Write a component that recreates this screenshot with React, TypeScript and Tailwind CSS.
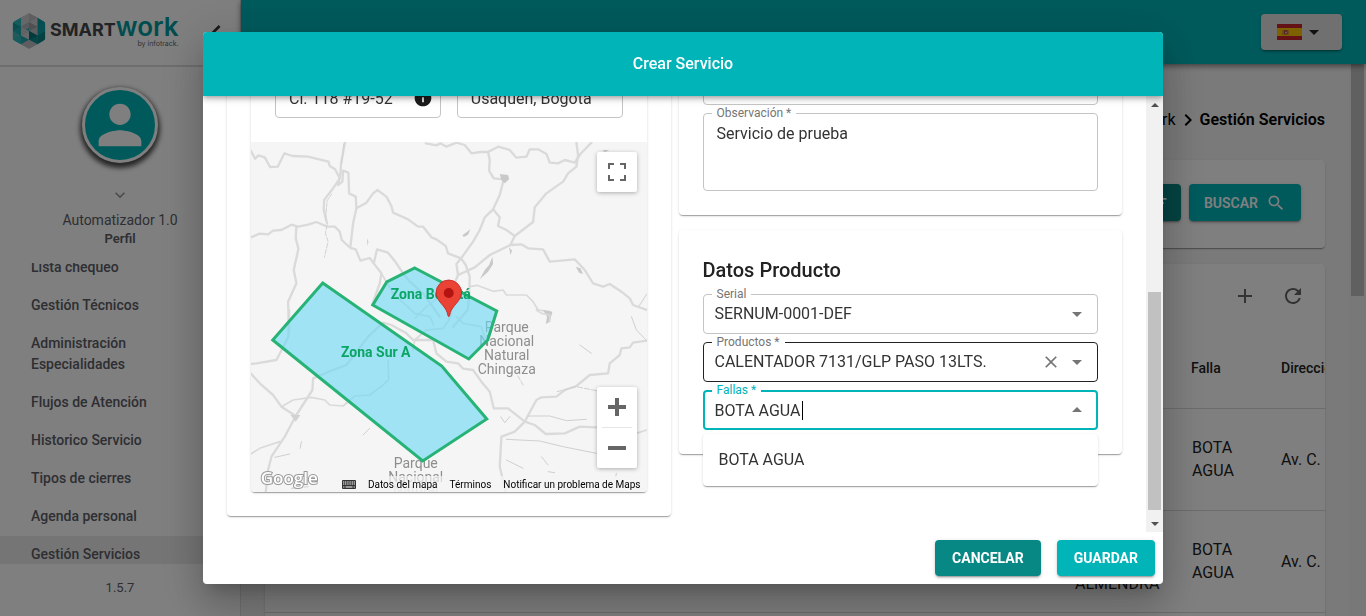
import React from "react";
import {
  MdPerson,
  MdExpandMore,
  MdChevronLeft,
  MdChevronRight,
  MdArrowDropDown,
  MdArrowDropUp,
  MdSearch,
  MdFilterList,
  MdAdd,
  MdRefresh,
  MdInfo,
  MdClose,
} from "react-icons/md";

const cardShadow =
  "shadow-[0_2px_1px_-1px_rgba(0,0,0,0.2),0_1px_1px_0_rgba(0,0,0,0.14),0_1px_3px_0_rgba(0,0,0,0.12)]";
const buttonShadow =
  "shadow-[0_3px_1px_-2px_rgba(0,0,0,0.2),0_2px_2px_0_rgba(0,0,0,0.14),0_1px_5px_0_rgba(0,0,0,0.12)]";

const navItems = [
  "Lista chequeo",
  "Gestión Técnicos",
  "Administración Especialidades",
  "Flujos de Atención",
  "Historico Servicio",
  "Tipos de cierres",
  "Agenda personal",
  "Gestión Servicios",
];

function Logo() {
  return (
    <div className="flex items-center gap-1">
      <svg viewBox="0 0 100 108" className="h-9 w-[34px]" aria-hidden="true">
        <path
          d="M50 3 95 27Q97 28 97 31V77Q97 80 95 81L50 105 5 81Q3 80 3 77V31Q3 28 5 27Z"
          fill="#23b5ba"
          stroke="#23b5ba"
          strokeWidth="3"
          strokeLinejoin="round"
        />
        <path d="M50 1 76 14 76 42 50 28 26 42 26 14Z" fill="#cfcfd1" />
        <path d="M50 1 76 14 50 28Z" fill="#bdbdc1" />
        <path d="M50 28 76 42 76 58 50 44 26 58 26 42Z" fill="#b4b5ba" />
        <path d="M50 28 76 42 50 54Z" fill="#9fa0a5" />
        <path d="M26 42 50 54 26 68Z" fill="#c6c7ca" />
        <path d="M50 54 76 42 76 68Z" fill="#bcbdc1" />
        <path d="M2 29 26 14 26 42Z" fill="#2bb9be" />
        <path d="M2 29 26 42 2 54Z" fill="#159aa1" />
        <path d="M2 54 26 68 2 79Z" fill="#4bb4b9" />
        <path d="M26 42 26 68 2 54Z" fill="#1fa9ae" />
        <path d="M76 14 98 29 76 42Z" fill="#079ba0" />
        <path d="M98 29 98 54 76 68 76 42Z" fill="#0aa0a4" />
        <path d="M98 54 98 79 76 94 76 68Z" fill="#078286" />
        <path d="M50 54 76 68 76 94 50 80Z" fill="#0b8a90" />
        <path d="M50 80 76 68 50 54Z" fill="#07757a" />
        <path d="M26 68 50 54 50 80Z" fill="#d0d1d4" />
        <path d="M2 79 26 68 26 94Z" fill="#2bb9be" />
        <path d="M26 68 50 80 26 94Z" fill="#25a5aa" />
        <path d="M50 80 76 94 50 107 26 94Z" fill="#bcbdc0" />
      </svg>
      <div className="flex flex-col items-end pt-1 font-['Inter',sans-serif]">
        <div className="flex items-baseline">
          <span className="text-lg leading-5 font-bold text-[#454649]">SMART</span>
          <span className="text-[26px] leading-5 font-semibold text-[#009a9e]">work</span>
        </div>
        <span className="text-[7px] leading-2 text-[#666]">by infotrack.</span>
      </div>
    </div>
  );
}

function Sidebar() {
  return (
    <aside className="flex w-[241px] shrink-0 flex-col border-r border-[#e0e0e0] bg-white text-[#5c5d66]">
      <div className="flex h-[67px] shrink-0 items-center justify-between border-b-2 border-[#dcdcdc] pr-2 pb-1 pl-3">
        <Logo />
        <button type="button" aria-label="Contraer menú" className="pt-1 text-[#333]">
          <MdChevronLeft className="size-8" />
        </button>
      </div>
      <div className="flex shrink-0 flex-col items-center pt-5">
        <div className="flex size-[76px] items-center justify-center rounded-full border-3 border-white bg-[#00b4b8] text-white shadow-[0_3px_5px_2px_rgba(0,0,0,0.7)]">
          <MdPerson className="size-16 shrink-0" />
        </div>
        <MdExpandMore className="mt-[22px] size-5 text-[#999]" />
        <span className="mt-1 text-sm leading-[22px]">Automatizador 1.0</span>
        <span className="text-[13px] leading-4 font-semibold">Perfil</span>
      </div>
      <nav className="mt-4 flex h-[301px] shrink-0 flex-col overflow-hidden">
        <ul className="-mt-[14px] flex flex-col gap-px">
          {navItems.map((item) => (
            <li key={item}>
              <a
                href="#"
                className={
                  item === "Gestión Servicios"
                    ? "block bg-[#ebebeb] py-2 pr-20 pl-[31px] text-sm leading-[21px] font-medium"
                    : "block py-2 pr-20 pl-[31px] text-sm leading-[21px] font-medium"
                }
              >
                {item}
              </a>
            </li>
          ))}
        </ul>
      </nav>
      <span className="mt-4 text-center text-[13px] leading-4">1.5.7</span>
    </aside>
  );
}

function SpainFlag() {
  return (
    <svg viewBox="0 0 25 16" className="h-4 w-[25px]" aria-hidden="true">
      <rect width="25" height="16" fill="#c8252c" />
      <rect y="4" width="25" height="8" fill="#ffc400" />
      <rect x="5.500" y="6" width="1" height="5" fill="#ad6a5a" />
      <rect x="10.500" y="6" width="1" height="5" fill="#ad6a5a" />
      <rect x="7" y="6" width="3.500" height="4.500" rx="1" fill="#b5413a" />
      <circle cx="9" cy="8.500" r="1" fill="#d9c8d8" />
    </svg>
  );
}

function ServicesTable() {
  return (
    <table className="w-full table-fixed text-left text-base leading-[23px] text-[#222]">
      <thead>
        <tr className="h-20 border-b border-[#d8d8d8] text-sm">
          <th />
          <th className="w-[116px]" />
          <th className="w-[90px] px-4 font-medium">Falla</th>
          <th className="w-[60px] pl-4 font-medium whitespace-nowrap">Dirección</th>
        </tr>
      </thead>
      <tbody>
        <tr className="h-[102px] border-b border-[#d8d8d8]">
          <td />
          <td />
          <td className="pr-4 pl-[17px]">BOTA AGUA</td>
          <td className="pl-4 whitespace-nowrap">Av. C.</td>
        </tr>
        <tr className="h-[102px] border-b border-[#d8d8d8]">
          <td />
          <td className="px-4 pt-11">ALMENDRA</td>
          <td className="pr-4 pl-[17px]">BOTA AGUA</td>
          <td className="pl-4 whitespace-nowrap">Av. C.</td>
        </tr>
      </tbody>
    </table>
  );
}

function ServicesPage() {
  return (
    <div className="flex min-w-0 flex-1 flex-col">
      <header className="z-10 flex h-16 shrink-0 items-center justify-end bg-[#00b4b8] pr-6 shadow-[0_2px_6px_rgba(0,0,0,0.5)]">
        <button
          type="button"
          aria-label="Idioma"
          className={`flex h-9 w-[81px] items-center rounded bg-[#e0e0e0] pl-4 text-[#222] ${buttonShadow}`}
        >
          <SpainFlag />
          <MdArrowDropDown className="size-6" />
        </button>
      </header>
      <div className="flex min-h-0 flex-1">
        <main className="flex min-w-0 flex-1 flex-col overflow-hidden bg-[#f5f5f5] px-6">
          <div className="flex h-24 shrink-0 items-center justify-end pt-4 text-base text-black">
            <a href="#">Smartwork</a>
            <MdChevronRight className="size-6" />
            <span className="font-semibold">Gestión Servicios</span>
          </div>
          <section className={`flex h-[88px] shrink-0 items-center justify-end gap-2 rounded bg-white pr-6 pb-[3px] ${cardShadow}`}>
            <button
              type="button"
              className={`flex h-[37px] items-center gap-2 rounded bg-[#088885] px-3 text-sm font-semibold text-white ${buttonShadow}`}
            >
              FILTRO <MdFilterList className="size-5" />
            </button>
            <button
              type="button"
              className={`flex h-[37px] items-center justify-center gap-2 rounded bg-[#00b4b8] px-[15px] text-sm font-semibold text-white ${buttonShadow}`}
            >
              BUSCAR <MdSearch className="size-5" />
            </button>
          </section>
          <section className={`mt-4 shrink-0 overflow-hidden rounded-t bg-white ${cardShadow}`}>
            <div className="flex h-16 items-center justify-end gap-6 pr-5 text-[#666]">
              <button type="button" aria-label="Agregar">
                <MdAdd className="size-6" />
              </button>
              <button type="button" aria-label="Actualizar">
                <MdRefresh className="size-6" />
              </button>
            </div>
            <ServicesTable />
            <div className="h-20" />
          </section>
        </main>
        <div className="w-[17px] shrink-0 bg-[#f1f1f1] px-[2px]">
          <div className="h-[232px] bg-[#c1c1c1]" />
        </div>
      </div>
    </div>
  );
}

function KeyboardIcon() {
  return (
    <svg viewBox="0 0 14 9" className="mr-[5px] ml-1 h-[9px] w-[14px]" aria-hidden="true">
      <rect width="14" height="9" rx="1" fill="#333" />
      <path
        d="M1 2h12M1 4h12"
        stroke="#fff"
        strokeWidth="1"
        strokeDasharray="1.200 0.600"
      />
      <path d="M3.500 7h7M1.200 7h1.200M11.600 7h1.200" stroke="#fff" strokeWidth="1" />
    </svg>
  );
}

function MapView() {
  return (
    <div className="relative h-[350px] overflow-hidden rounded-b bg-[#f5f5f5]">
      <svg
        viewBox="0 0 398 350"
        preserveAspectRatio="xMidYMid slice"
        className="h-full w-full font-['Roboto',sans-serif]"
        role="img"
        aria-label="Mapa de zonas"
      >
        <rect width="398" height="350" fill="#f5f5f5" />
        <g
          transform="translate(-10 -12) scale(0.33333)"
          fill="none"
          stroke="#dadada"
          strokeWidth="7"
          strokeLinejoin="round"
          strokeLinecap="round"
        >
          <path d="M33 62 46 86 56 76 75 82 91 111 114 110 134 70 158 78 205 80 266 95 270 108 286 118 300 145 278 178 253 210 252 240 262 280" />
          <path d="M316 36 304 100 302 130 295 165 308 155 310 122 326 128 328 190 348 200 350 235 340 280 332 350" />
          <path d="M33 322 60 311 85 313 100 302 125 300 155 284 175 290 205 284 230 276 262 290 285 290 300 305 306 330 332 354 348 358 362 392 390 384 402 400 425 430 420 460 398 522" />
          <path d="M170 290 168 325 176 356 162 420 170 460 145 515 148 600" />
          <path d="M350 235 380 218 400 190 413 180 440 200 455 228 460 248 505 268 535 290 550 290 575 322 590 328 618 348 625 370 664 385 650 402 655 435 640 470 632 560" />
          <path d="M558 40 590 46 602 40 620 50 650 38 675 45 695 70 722 66 745 66 775 50 810 60 830 83 860 80 870 58 895 58 920 72 930 98 955 100 975 90 1005 98 1022 72 1055 38" />
          <path d="M745 66 750 90 748 122 762 145 792 148 780 195 760 238 735 262 720 300 700 335 664 385" />
          <path d="M1010 38 1015 75 1010 110 985 130 970 155 920 190 885 232 880 276 825 318 812 345 750 375 705 412 655 435" />
          <path d="M760 238 780 262 775 288 800 300 825 318" />
          <path d="M812 345 845 343 865 355 910 358 930 395 1005 388 1035 420 1060 460 1090 470 1110 462 1145 485 1170 505 1180 525 1221 540" />
          <path d="M1221 492 1198 528" strokeWidth="4" />
          <path d="M402 400 412 358 445 368 470 400 490 430 510 455 550 490 600 560" />
          <path d="M425 430 460 490 525 550 570 560 582 585" strokeWidth="5" />
          <path d="M664 385 678 405 690 440 688 500 684 540 640 590" />
          <path d="M690 470 712 466 760 484 790 480 800 495 860 495 880 515 895 540 930 545" strokeWidth="5" />
          <path d="M525 565 560 530 640 470" strokeWidth="4" />
          <g fill="#c9c9c9" stroke="none">
            <path d="M780 132 805 135 808 148 795 160 785 150Z" />
            <path d="M668 316 692 298 685 314 672 321Z" />
            <path d="M758 380 760 402 745 425 720 448 735 420 748 405Z" />
            <path d="M1008 410 1022 415 1030 432 1018 428Z" />
            <path d="M808 352 817 362 812 375Z" />
            <path d="M1088 60 1108 60 1096 67Z" />
            <path d="M910 540 938 545 930 575 918 582 922 560Z" />
            <path d="M382 325 386 335 383 348Z" />
          </g>
          <g stroke="#d2d2d2" strokeWidth="3">
            <path d="M262 285 257 310 265 335 254 382" strokeDasharray="14 5" />
            <path d="M312 42 306 100" />
            <path d="M276 192 262 212 257 270" strokeDasharray="12 4" />
          </g>
        </g>
        <g
          transform="translate(-10 168) scale(0.33333)"
          fill="none"
          stroke="#dadada"
          strokeWidth="7"
          strokeLinejoin="round"
          strokeLinecap="round"
        >
          <path d="M148 0 146 80 110 150 50 160 33 162" />
          <path d="M33 190 60 220 100 255 125 290 168 318 135 380 95 440 85 480 78 546" />
          <path d="M33 432 60 415 120 395" strokeWidth="5" />
          <path d="M125 290 160 270 215 262 255 270 270 285 310 288 345 258 390 255 430 225 447 208 445 150" strokeWidth="5" />
          <path d="M168 318 218 240 220 205 280 180 320 165 385 80 430 38 455 45 500 70 520 90 580 90 590 130 620 155 655 160 670 176 700 180 725 215 750 245 762 295 805 295 855 335 885 345 918 372 975 370 1020 350 1070 352" />
          <path d="M855 335 890 270 905 262 950 260 975 240 1010 228 1050 195 1105 190 1110 160 1140 135 1145 115 1170 112 1180 98 1221 92" />
          <path d="M855 335 825 365 785 380 780 470 798 546" />
          <path d="M1190 370 1221 360" strokeWidth="5" />
          <path d="M632 0 628 30 610 55 560 60 525 90 520 120" strokeWidth="5" />
          <path d="M650 20 670 40 725 50 740 95" strokeWidth="5" />
          <path d="M890 0 905 10 930 15 930 35" strokeWidth="5" />
          <g stroke="#cfcfcf" strokeWidth="3">
            <path d="M865 318 930 318 980 332 1040 328" />
            <path d="M800 388 900 393 970 410 1070 430" />
            <path d="M1020 105 1055 130" />
            <path d="M952 245 1010 230 1075 243" strokeDasharray="16 5" />
            <path d="M783 320 795 338 810 320" />
            <path d="M370 375 390 355M185 395 181 415M105 442 150 432" />
            <path d="M905 440 925 465M925 485 945 488M800 450 850 475M1130 490 1128 500" />
            <path d="M1175 20 1190 60 1221 92" />
            <path d="M155 535 205 530M815 165 850 225" strokeDasharray="14 5" />
          </g>
          <path d="M152 315 182 315 168 335Z" fill="#d2d2d2" stroke="none" />
        </g>
        <g
          fill="#8e8e8e"
          stroke="#f5f5f5"
          strokeWidth="2"
          paintOrder="stroke"
          fontSize="14"
          textAnchor="middle"
        >
          <text x="257" y="190">Parque</text>
          <text x="257" y="204">Nacional</text>
          <text x="257" y="218">Natural</text>
          <text x="257" y="232">Chingaza</text>
          <text x="166" y="326">Parque</text>
          <text x="166" y="340">Nacional</text>
          <text x="166" y="353" opacity="0.4">Natural</text>
        </g>
        <g fill="#6bd8f5" fillOpacity="0.62" stroke="#27b376" strokeWidth="3">
          <path d="M165 126 247 169 238 198 219 217 123 163 137 140Z" />
          <path d="M73 141 192 224 237 277 173 319 23 198Z" />
        </g>
        <g fill="#0ba565" fontSize="14" fontWeight="700" textAnchor="middle">
          <text x="181" y="157">Zona Bogotá</text>
          <text x="126" y="215">Zona Sur A</text>
        </g>
        <path
          d="M199 174.500c-.8 0-1-1.400-1.600-4-1.700-6.500-11.100-11.500-11.100-19.800a12.700 12.700 0 0 1 25.400 0c0 8.300-9.400 13.300-11.100 19.800-.6 2.600-.8 4-1.600 4Z"
          fill="#ea4335"
          stroke="#c5221f"
          strokeWidth="0.800"
        />
        <circle cx="199" cy="151" r="5" fill="#b31412" />
        <text
          x="11"
          y="342"
          fontSize="17"
          fontFamily="Open Sans, sans-serif"
          fontWeight="600"
          fill="#ffffff"
          stroke="#999999"
          strokeWidth="2"
          paintOrder="stroke"
        >
          Google
        </text>
      </svg>
      <button
        type="button"
        aria-label="Pantalla completa"
        className="absolute top-[10px] right-[10px] flex size-10 items-center justify-center rounded-xs bg-white shadow-[0_1px_4px_rgba(0,0,0,0.3)]"
      >
        <svg viewBox="0 0 18 18" className="size-[18px]" fill="#666" aria-hidden="true">
          <path d="M0 0v6h2V2h4V0H0zm16 0h-4v2h4v4h2V0h-2zm0 16h-4v2h6v-6h-2v4zM2 12H0v6h6v-2H2v-4z" />
        </svg>
      </button>
      <div className="absolute right-[10px] bottom-6 flex w-10 flex-col items-center rounded-xs bg-white shadow-[0_1px_4px_rgba(0,0,0,0.3)]">
        <button type="button" aria-label="Acercar" className="flex size-10 items-center justify-center">
          <svg viewBox="0 0 18 18" className="size-[18px]" fill="#666" aria-hidden="true">
            <path d="M18 7h-7V0H7v7H0v4h7v7h4v-7h7z" />
          </svg>
        </button>
        <span className="h-px w-[30px] bg-[#e6e6e6]" />
        <button type="button" aria-label="Alejar" className="flex size-10 items-center justify-center">
          <svg viewBox="0 0 18 18" className="size-[18px]" fill="#666" aria-hidden="true">
            <path d="M0 7h18v4H0z" />
          </svg>
        </button>
      </div>
      <div className="absolute right-0 bottom-0 flex h-4 items-center bg-[#f5f5f5]/70 text-[10px] text-black">
        <KeyboardIcon />
        <a href="#" className="px-[7px]">Datos del mapa</a>
        <a href="#" className="px-[5px]">Términos</a>
        <a href="#" className="pr-[6px] pl-[7px]">Notificar un problema de Maps</a>
      </div>
    </div>
  );
}

function FieldLabel({ id, text, active = false }: { id: string; text: string; active?: boolean }) {
  return (
    <label
      htmlFor={id}
      className={
        active
          ? "absolute -top-2 left-[9px] bg-white px-[5px] text-xs leading-4 text-[#00b4b8]"
          : "absolute -top-2 left-[9px] bg-white px-[5px] text-xs leading-4 text-[#757575]"
      }
    >
      {text}
    </label>
  );
}

function LocationCard() {
  return (
    <section className={`rounded bg-white p-6 ${cardShadow}`}>
      <div className={`rounded bg-white ${cardShadow}`}>
        <div className="grid grid-cols-2 gap-4 p-6">
          <div className="relative">
            <input
              aria-label="Dirección"
              defaultValue="Cl. 118 #19-52"
              className="h-10 w-full rounded border border-[#c4c4c4] pr-10 pl-[13px] text-base text-[#333]"
            />
            <MdInfo className="absolute top-[10px] right-2 size-5 text-[#1c1c1c]" />
          </div>
          <input
            aria-label="Ciudad"
            defaultValue="Usaquén, Bogotá"
            className="h-10 w-full rounded border border-[#c4c4c4] px-[13px] text-base text-[#333]"
          />
        </div>
        <MapView />
      </div>
    </section>
  );
}

function ServiceDetails() {
  return (
    <section className={`flex flex-col gap-2 rounded bg-white p-6 pt-[35px] ${cardShadow}`}>
      <input
        aria-label="Detalle"
        className="h-10 w-full rounded border border-[#c4c4c4] px-[11px] text-base"
      />
      <div className="relative">
        <textarea
          id="observacion"
          defaultValue="Servicio de prueba"
          className="block h-[78px] w-full resize-none rounded border border-[#c4c4c4] px-[13px] py-2 text-base leading-6 text-[#333]"
        />
        <FieldLabel id="observacion" text="Observación *" />
      </div>
    </section>
  );
}

function ProductDetails() {
  return (
    <section className={`rounded bg-white p-6 ${cardShadow}`}>
      <h2 className="mb-2 text-xl leading-8 font-medium text-[#222]">Datos Producto</h2>
      <div className="flex flex-col gap-2">
        <div className="relative">
          <select
            id="serial"
            className="block h-10 w-full appearance-none rounded border border-[#c4c4c4] bg-white px-[11px] text-base text-[#333]"
          >
            <option>SERNUM-0001-DEF</option>
          </select>
          <FieldLabel id="serial" text="Serial" />
          <MdArrowDropDown className="pointer-events-none absolute top-2 right-[9px] size-6 text-[#757575]" />
        </div>
        <div className="relative">
          <select
            id="productos"
            className="block h-10 w-full appearance-none rounded border border-[#222] bg-white px-[11px] text-base text-[#333]"
          >
            <option>CALENTADOR 7131/GLP PASO 13LTS.</option>
          </select>
          <FieldLabel id="productos" text="Productos *" />
          <button type="button" aria-label="Borrar" className="absolute top-[10px] right-[37px] text-[#757575]">
            <MdClose className="size-5" />
          </button>
          <MdArrowDropDown className="pointer-events-none absolute top-2 right-[9px] size-6 text-[#757575]" />
        </div>
        <div className="relative">
          <input
            id="fallas"
            role="combobox"
            aria-expanded="true"
            aria-controls="fallas-opciones"
            defaultValue="BOTA AGUA"
            className="block h-10 w-full rounded border-2 border-[#00b4b8] px-[10px] text-base text-[#333] outline-none"
          />
          <span className="absolute top-[11px] left-[99px] h-[19px] w-px bg-black" />
          <FieldLabel id="fallas" text="Fallas *" active />
          <MdArrowDropUp className="absolute top-2 right-[9px] size-6 text-[#757575]" />
          <ul
            id="fallas-opciones"
            role="listbox"
            className={`absolute inset-x-0 top-full z-10 mt-1 rounded bg-white py-2 ${cardShadow}`}
          >
            <li role="option" aria-selected="true" className="px-4 py-1.5 text-base text-[#333]">
              BOTA AGUA
            </li>
          </ul>
        </div>
      </div>
    </section>
  );
}

function DialogScrollbar() {
  return (
    <div className="flex w-[17px] shrink-0 flex-col items-center bg-[#f1f1f1]" aria-hidden="true">
      <span className="flex h-[17px] items-center">
        <svg viewBox="0 0 8 4" className="h-1 w-2" fill="#505050">
          <path d="M4 0 8 4H0z" />
        </svg>
      </span>
      <span className="flex min-h-0 w-full flex-1 flex-col justify-end px-[2px] pb-[5px]">
        <span className="h-[218px] bg-[#c1c1c1]" />
      </span>
      <span className="flex h-[17px] items-center">
        <svg viewBox="0 0 8 4" className="h-1 w-2" fill="#505050">
          <path d="M0 0h8L4 4z" />
        </svg>
      </span>
    </div>
  );
}

function CreateServiceDialog() {
  return (
    <div className="fixed inset-0 z-20 flex items-center justify-center bg-black/50 p-8">
      <div
        role="dialog"
        aria-modal="true"
        aria-labelledby="dialog-title"
        className="flex h-full w-full max-w-[960px] flex-col overflow-hidden rounded bg-white shadow-[0_11px_15px_-7px_rgba(0,0,0,0.2),0_24px_38px_3px_rgba(0,0,0,0.14),0_9px_46px_8px_rgba(0,0,0,0.12)]"
      >
        <header className="z-10 flex h-16 shrink-0 items-center justify-center bg-[#00b4b8] text-white shadow-[0_2px_4px_-1px_rgba(0,0,0,0.2),0_4px_5px_0_rgba(0,0,0,0.14),0_1px_10px_0_rgba(0,0,0,0.12)]">
          <h1 id="dialog-title" className="text-base font-medium">
            Crear Servicio
          </h1>
        </header>
        <div className="flex min-h-0 flex-1">
          <div className="flex min-w-0 flex-1 flex-col justify-end overflow-hidden px-6 pb-4">
            <div className="grid grid-cols-2 items-start gap-2">
              <LocationCard />
              <div className="flex flex-col gap-[15px]">
                <ServiceDetails />
                <ProductDetails />
              </div>
            </div>
          </div>
          <DialogScrollbar />
        </div>
        <footer className="flex shrink-0 justify-end gap-4 p-2">
          <button
            type="button"
            className={`h-9 rounded bg-[#088885] px-[17px] text-sm font-bold text-white ${buttonShadow}`}
          >
            CANCELAR
          </button>
          <button
            type="button"
            className={`h-9 rounded bg-[#00b4b8] px-[17px] text-sm font-bold text-white ${buttonShadow}`}
          >
            GUARDAR
          </button>
        </footer>
      </div>
    </div>
  );
}

export default function App() {
  return (
    <div className="flex h-screen overflow-hidden bg-[#f5f5f5] font-['Roboto',sans-serif]">
      <Sidebar />
      <ServicesPage />
      <CreateServiceDialog />
    </div>
  );
}
